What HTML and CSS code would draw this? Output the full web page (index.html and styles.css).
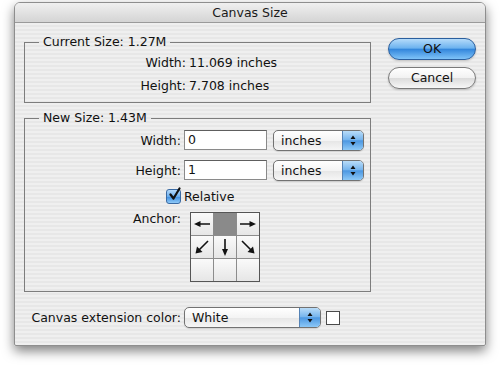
FILE: index.html
```html
<!DOCTYPE html>
<html>
<head>
<meta charset="utf-8">
<title>Canvas Size</title>
<link rel="stylesheet" href="styles.css">
</head>
<body>
<div class="window">
  <div class="titlebar">Canvas Size</div>
  <div class="content">
    <div class="main">
      <div class="left">
        <fieldset class="group current">
          <legend>Current Size: 1.27M</legend>
          <div class="info-grid">
            <span class="info-lbl">Width:</span><span>11.069 inches</span>
            <span class="info-lbl">Height:</span><span>7.708 inches</span>
          </div>
        </fieldset>
        <fieldset class="group newsize">
          <legend>New Size: 1.43M</legend>
          <div class="row">
            <span class="lbl">Width:</span>
            <div class="field">0</div>
            <div class="select unit"><span class="sel-text">inches</span><span class="sel-arrows"><svg width="20" height="19" viewBox="0 0 20 19"><path d="M10 4.5 L12.5 8 L7.5 8 Z M10 14.5 L12.5 11 L7.5 11 Z" fill="#111"/></svg></span></div>
          </div>
          <div class="row gap10">
            <span class="lbl">Height:</span>
            <div class="field">1</div>
            <div class="select unit"><span class="sel-text">inches</span><span class="sel-arrows"><svg width="20" height="19" viewBox="0 0 20 19"><path d="M10 4.5 L12.5 8 L7.5 8 Z M10 14.5 L12.5 11 L7.5 11 Z" fill="#111"/></svg></span></div>
          </div>
          <div class="row gap6">
            <span class="lbl lbl-end"><span class="checkbox"><svg width="15" height="15" viewBox="0 0 15 15"><path d="M3.5 7.5 L6.5 11.5 L12.5 1.5" fill="none" stroke="#111" stroke-width="2.2" stroke-linecap="round" stroke-linejoin="round"/></svg></span></span>
            <span class="check-text">Relative</span>
          </div>
          <div class="row anchor-row gap6">
            <span class="lbl anchor-lbl">Anchor:</span>
            <div class="anchor">
              <div class="cell"><svg width="22" height="22" viewBox="0 0 22 22"><path d="M8 11 H19" stroke="#111" stroke-width="1.6"/><path d="M3 11 L9.5 8 L9.5 14 Z" fill="#111"/></svg></div>
              <div class="cell on"></div>
              <div class="cell"><svg width="22" height="22" viewBox="0 0 22 22"><path d="M3 11 H14" stroke="#111" stroke-width="1.6"/><path d="M19 11 L12.5 8 L12.5 14 Z" fill="#111"/></svg></div>
              <div class="cell"><svg width="22" height="22" viewBox="0 0 22 22"><path d="M17 5 L8 14" stroke="#111" stroke-width="1.6"/><path d="M4.5 17.5 L6 10.5 L11.5 16 Z" fill="#111"/></svg></div>
              <div class="cell"><svg width="22" height="22" viewBox="0 0 22 22"><path d="M11 3 V14" stroke="#111" stroke-width="1.6"/><path d="M11 20 L8 13 L14 13 Z" fill="#111"/></svg></div>
              <div class="cell"><svg width="22" height="22" viewBox="0 0 22 22"><path d="M5 5 L14 14" stroke="#111" stroke-width="1.6"/><path d="M17.5 17.5 L16 10.5 L10.5 16 Z" fill="#111"/></svg></div>
              <div class="cell"></div>
              <div class="cell"></div>
              <div class="cell"></div>
            </div>
          </div>
        </fieldset>
      </div>
      <div class="right">
        <div class="btn btn-default">OK</div>
        <div class="btn">Cancel</div>
      </div>
    </div>
    <div class="row ext-row">
      <span class="lbl ext-lbl">Canvas extension color:</span>
      <div class="select ext"><span class="sel-text">White</span><span class="sel-arrows"><svg width="20" height="19" viewBox="0 0 20 19"><path d="M10 4.5 L12.5 8 L7.5 8 Z M10 14.5 L12.5 11 L7.5 11 Z" fill="#111"/></svg></span></div>
      <div class="swatch"></div>
    </div>
  </div>
</div>
</body>
</html>
```

FILE: styles.css
```css
html, body {
  margin: 0;
  padding: 0;
}
body {
  width: 500px;
  height: 368px;
  background: #ffffff;
  font-family: "DejaVu Sans", "Noto Sans", sans-serif;
  font-size: 12.5px;
  color: #111;
  overflow: hidden;
}
.window {
  margin: 2px 0 0 14px;
  width: 472px;
  height: 344px;
  box-sizing: border-box;
  border: 1px solid #8e8e8e;
  border-radius: 6px 6px 2px 2px;
  background: repeating-linear-gradient(to bottom, #efefef 0, #efefef 2px, #e7e7e7 2px, #e7e7e7 4px);
  box-shadow: 0 5px 12px rgba(0, 0, 0, 0.5);
  overflow: hidden;
}
.titlebar {
  height: 19px;
  line-height: 19px;
  text-align: center;
  background: linear-gradient(#f0f0f0, #d4d4d4);
  border-bottom: 1px solid #9a9a9a;
  color: #1a1a1a;
}
.content {
  padding: 11px 9px 0 9px;
}
.main {
  display: flex;
  gap: 17px;
}
.left {
  width: 348px;
}
.right {
  width: 88px;
  padding-top: 4px;
  display: flex;
  flex-direction: column;
  gap: 7px;
}
fieldset.group {
  margin: 0;
  padding: 3px 0 6px 0;
  border: 1px solid #7d7d7d;
  min-width: 0;
}
fieldset.group legend {
  margin-left: 14px;
  padding: 0 4px;
  line-height: 16px;
  height: 16px;
}
.newsize {
  margin-top: 7px !important;
  padding: 4px 0 9px 0 !important;
}
.info-grid {
  display: grid;
  grid-template-columns: 161px auto;
  column-gap: 3px;
  row-gap: 3px;
  grid-auto-rows: 20px;
  line-height: 20px;
}
.info-lbl {
  text-align: right;
}
.row {
  display: flex;
  align-items: center;
  height: 20px;
}
.gap10 { margin-top: 10px; }
.gap6 { margin-top: 6px; }
.lbl {
  width: 156px;
  flex: none;
  text-align: right;
}
.lbl-end {
  display: flex;
  justify-content: flex-end;
}
.field {
  margin-left: 3px;
  width: 83px;
  height: 20px;
  box-sizing: border-box;
  border: 1px solid #8a8a8a;
  border-top-color: #5e5e5e;
  background: #fff;
  padding-left: 3px;
  line-height: 18px;
}
.select {
  display: flex;
  height: 21px;
  box-sizing: border-box;
  border: 1px solid #727272;
  border-radius: 5px;
  background: linear-gradient(#ffffff, #f4f4f4 50%, #e6e6e6 52%, #f6f6f6);
  overflow: hidden;
  box-shadow: 0 1px 1px rgba(0,0,0,0.12);
}
.select.unit {
  margin-left: 6px;
  width: 91px;
}
.sel-text {
  flex: 1;
  padding-left: 7px;
  line-height: 19px;
}
.sel-arrows {
  width: 20px;
  flex: none;
  background: linear-gradient(#b9dcf8, #78b6ee 45%, #4d98e2 52%, #8cc8f7);
  border-left: 1px solid #5583b5;
  display: flex;
  align-items: center;
  justify-content: center;
}
.sel-arrows svg {
  display: block;
}
.checkbox {
  width: 15px;
  height: 15px;
  box-sizing: border-box;
  border: 1px solid #3a6aa3;
  border-radius: 3px;
  background: linear-gradient(#b6dafa, #6aaeee 50%, #3d8ddf 52%, #8fcaf8);
  position: relative;
  overflow: visible;
}
.checkbox svg {
  position: absolute;
  left: 0;
  top: -3px;
}
.check-text {
  margin-left: 3px;
}
.anchor-row {
  height: auto;
  align-items: flex-start;
}
.anchor-lbl {
  line-height: 14px;
}
.anchor {
  margin-left: 9px;
  display: grid;
  grid-template-columns: repeat(3, 22px);
  grid-template-rows: repeat(3, 22px);
  gap: 1px;
  background: #8c8c8c;
  border: 1px solid #555;
}
.cell {
  background: linear-gradient(#fafafa, #e6e6e6);
}
.cell svg {
  display: block;
}
.cell.on {
  background: #8a8a8a;
}
.btn {
  height: 22px;
  box-sizing: border-box;
  border-radius: 11px;
  border: 1px solid #7a7a7a;
  background: linear-gradient(#ffffff, #f2f2f2 48%, #dcdcdc 52%, #f7f7f7);
  text-align: center;
  line-height: 20px;
  box-shadow: 0 1px 2px rgba(0,0,0,0.2);
}
.btn-default {
  border-color: #2b5f9e;
  background: linear-gradient(#b5dbfa, #6db3ef 45%, #3487dc 52%, #7fc3f8);
}
.ext-row {
  margin-top: 15px;
  height: 21px;
}
.ext-lbl {
  width: 157px;
}
.select.ext {
  margin-left: 3px;
  width: 137px;
}
.swatch {
  margin-left: 5px;
  width: 14px;
  height: 14px;
  box-sizing: border-box;
  border: 1px solid #4a4a4a;
  background: #fff;
}
```
